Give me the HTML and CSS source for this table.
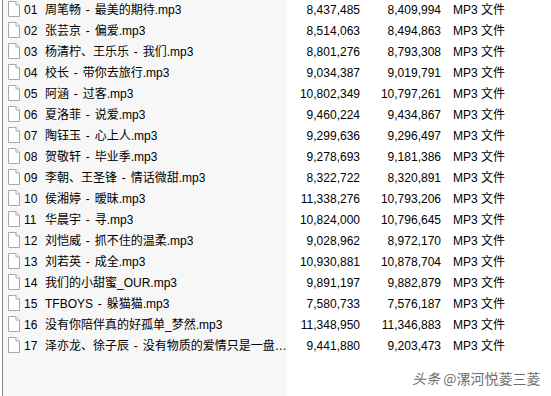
FILE: index.html
```html
<!DOCTYPE html>
<html lang="zh-CN">
<head>
  <meta charset="UTF-8">
  <title>音乐文件</title>
  <link rel="stylesheet" href="styles.css">
</head>
<body>

  <div class="list">
    <div class="row"><div class="name"><svg class="icon" viewBox="0 0 12 16"><path d="M0.5 0.5H8L11.5 4V15.5H0.5Z"/><path d="M8 0.5V4H11.5"/></svg><span class="no">01</span><span class="title">周笔畅 - 最美的期待.mp3</span></div><div class="size">8,437,485</div><div class="size">8,409,994</div><div class="type">MP3 文件</div></div>
    <div class="row"><div class="name"><svg class="icon" viewBox="0 0 12 16"><path d="M0.5 0.5H8L11.5 4V15.5H0.5Z"/><path d="M8 0.5V4H11.5"/></svg><span class="no">02</span><span class="title">张芸京 - 偏爱.mp3</span></div><div class="size">8,514,063</div><div class="size">8,494,863</div><div class="type">MP3 文件</div></div>
    <div class="row"><div class="name"><svg class="icon" viewBox="0 0 12 16"><path d="M0.5 0.5H8L11.5 4V15.5H0.5Z"/><path d="M8 0.5V4H11.5"/></svg><span class="no">03</span><span class="title">杨清柠、王乐乐 - 我们.mp3</span></div><div class="size">8,801,276</div><div class="size">8,793,308</div><div class="type">MP3 文件</div></div>
    <div class="row"><div class="name"><svg class="icon" viewBox="0 0 12 16"><path d="M0.5 0.5H8L11.5 4V15.5H0.5Z"/><path d="M8 0.5V4H11.5"/></svg><span class="no">04</span><span class="title">校长 - 带你去旅行.mp3</span></div><div class="size">9,034,387</div><div class="size">9,019,791</div><div class="type">MP3 文件</div></div>
    <div class="row"><div class="name"><svg class="icon" viewBox="0 0 12 16"><path d="M0.5 0.5H8L11.5 4V15.5H0.5Z"/><path d="M8 0.5V4H11.5"/></svg><span class="no">05</span><span class="title">阿涵 - 过客.mp3</span></div><div class="size">10,802,349</div><div class="size">10,797,261</div><div class="type">MP3 文件</div></div>
    <div class="row"><div class="name"><svg class="icon" viewBox="0 0 12 16"><path d="M0.5 0.5H8L11.5 4V15.5H0.5Z"/><path d="M8 0.5V4H11.5"/></svg><span class="no">06</span><span class="title">夏洛菲 - 说爱.mp3</span></div><div class="size">9,460,224</div><div class="size">9,434,867</div><div class="type">MP3 文件</div></div>
    <div class="row"><div class="name"><svg class="icon" viewBox="0 0 12 16"><path d="M0.5 0.5H8L11.5 4V15.5H0.5Z"/><path d="M8 0.5V4H11.5"/></svg><span class="no">07</span><span class="title">陶钰玉 - 心上人.mp3</span></div><div class="size">9,299,636</div><div class="size">9,296,497</div><div class="type">MP3 文件</div></div>
    <div class="row"><div class="name"><svg class="icon" viewBox="0 0 12 16"><path d="M0.5 0.5H8L11.5 4V15.5H0.5Z"/><path d="M8 0.5V4H11.5"/></svg><span class="no">08</span><span class="title">贺敬轩 - 毕业季.mp3</span></div><div class="size">9,278,693</div><div class="size">9,181,386</div><div class="type">MP3 文件</div></div>
    <div class="row"><div class="name"><svg class="icon" viewBox="0 0 12 16"><path d="M0.5 0.5H8L11.5 4V15.5H0.5Z"/><path d="M8 0.5V4H11.5"/></svg><span class="no">09</span><span class="title">李朝、王圣锋 - 情话微甜.mp3</span></div><div class="size">8,322,722</div><div class="size">8,320,891</div><div class="type">MP3 文件</div></div>
    <div class="row"><div class="name"><svg class="icon" viewBox="0 0 12 16"><path d="M0.5 0.5H8L11.5 4V15.5H0.5Z"/><path d="M8 0.5V4H11.5"/></svg><span class="no">10</span><span class="title">侯湘婷 - 暧昧.mp3</span></div><div class="size">11,338,276</div><div class="size">10,793,206</div><div class="type">MP3 文件</div></div>
    <div class="row"><div class="name"><svg class="icon" viewBox="0 0 12 16"><path d="M0.5 0.5H8L11.5 4V15.5H0.5Z"/><path d="M8 0.5V4H11.5"/></svg><span class="no">11</span><span class="title">华晨宇 - 寻.mp3</span></div><div class="size">10,824,000</div><div class="size">10,796,645</div><div class="type">MP3 文件</div></div>
    <div class="row"><div class="name"><svg class="icon" viewBox="0 0 12 16"><path d="M0.5 0.5H8L11.5 4V15.5H0.5Z"/><path d="M8 0.5V4H11.5"/></svg><span class="no">12</span><span class="title">刘恺威 - 抓不住的温柔.mp3</span></div><div class="size">9,028,962</div><div class="size">8,972,170</div><div class="type">MP3 文件</div></div>
    <div class="row"><div class="name"><svg class="icon" viewBox="0 0 12 16"><path d="M0.5 0.5H8L11.5 4V15.5H0.5Z"/><path d="M8 0.5V4H11.5"/></svg><span class="no">13</span><span class="title">刘若英 - 成全.mp3</span></div><div class="size">10,930,881</div><div class="size">10,878,704</div><div class="type">MP3 文件</div></div>
    <div class="row"><div class="name"><svg class="icon" viewBox="0 0 12 16"><path d="M0.5 0.5H8L11.5 4V15.5H0.5Z"/><path d="M8 0.5V4H11.5"/></svg><span class="no">14</span><span class="title">我们的小甜蜜_OUR.mp3</span></div><div class="size">9,891,197</div><div class="size">9,882,879</div><div class="type">MP3 文件</div></div>
    <div class="row"><div class="name"><svg class="icon" viewBox="0 0 12 16"><path d="M0.5 0.5H8L11.5 4V15.5H0.5Z"/><path d="M8 0.5V4H11.5"/></svg><span class="no">15</span><span class="title">TFBOYS - 躲猫猫.mp3</span></div><div class="size">7,580,733</div><div class="size">7,576,187</div><div class="type">MP3 文件</div></div>
    <div class="row"><div class="name"><svg class="icon" viewBox="0 0 12 16"><path d="M0.5 0.5H8L11.5 4V15.5H0.5Z"/><path d="M8 0.5V4H11.5"/></svg><span class="no">16</span><span class="title">没有你陪伴真的好孤单_梦然.mp3</span></div><div class="size">11,348,950</div><div class="size">11,346,883</div><div class="type">MP3 文件</div></div>
    <div class="row"><div class="name"><svg class="icon" viewBox="0 0 12 16"><path d="M0.5 0.5H8L11.5 4V15.5H0.5Z"/><path d="M8 0.5V4H11.5"/></svg><span class="no">17</span><span class="title">泽亦龙、徐子辰 - 没有物质的爱情只是一盘散沙.mp3</span></div><div class="size">9,441,880</div><div class="size">9,203,473</div><div class="type">MP3 文件</div></div>
  </div>

  <!-- watermark over the list -->
  <div class="mark"><span class="logo">头条</span> @漯河悦菱三菱</div>

</body>
</html>
```

FILE: styles.css
```css
html, body { height: 100%; }
body { margin: 0; background: #fff; font-family: "Liberation Sans", "Noto Sans CJK SC", sans-serif; font-size: 12px; color: #000; overflow: hidden; }
.list { margin-left: 2px; height: 100%; border-left: 1px solid #8a8a8a; background: linear-gradient(to right, #f7f7f7 284px, #fff 284px); }
.row { display: grid; grid-template-columns: 284px 73px 81px auto; height: 21px; line-height: 21px; }
.name { display: flex; align-items: flex-start; padding-left: 5px; overflow: hidden; white-space: nowrap; }
.icon { width: 12px; height: 16px; margin-top: 1px; margin-right: 4px; flex: none; }
.icon path { fill: #fff; stroke: #a8a8a8; stroke-width: 1; }
.no { width: 21px; flex: none; }
.title { overflow: hidden; text-overflow: ellipsis; min-width: 0; word-spacing: 1.5px; }
.size { text-align: right; white-space: nowrap; }
.type { padding-left: 12px; white-space: nowrap; }
.mark { position: absolute; left: 412px; top: 369px; font-family: "Noto Sans CJK SC", sans-serif; font-size: 14px; line-height: 18px; color: #6e6e6e; text-shadow: 0 0 2px #fff, 0 0 1px #fff; }
.logo { font-style: italic; }
```
